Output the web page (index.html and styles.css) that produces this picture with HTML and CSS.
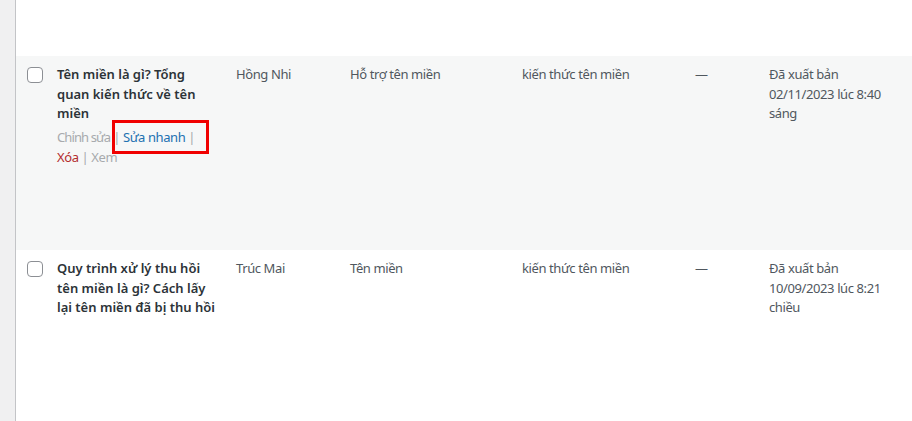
FILE: index.html
```html
<!DOCTYPE html>
<html lang="vi">
<head>
<meta charset="utf-8">
<title>Bài viết</title>
<link rel="stylesheet" href="styles.css">
</head>
<body>
<div class="wrap">
  <div class="top-space"></div>
  <div class="row row-alt">
    <div class="cell check"><span class="checkbox"></span></div>
    <div class="cell title">
      <strong class="post-title">Tên miền là gì? Tổng quan kiến thức về tên miền</strong>
      <div class="row-actions"><span class="act-muted act-edit">Chỉnh sửa</span><span class="sep"> | </span><span class="hl"><span class="act-link">Sửa nhanh</span><span class="sep"> |</span><span class="hl-box"></span></span> <span class="act-del">Xóa</span><span class="sep"> | </span><span class="act-muted">Xem</span></div>
    </div>
    <div class="cell">Hồng Nhi</div>
    <div class="cell">Hỗ trợ tên miền</div>
    <div class="cell">kiến thức tên miền</div>
    <div class="cell">—</div>
    <div class="cell date">Đã xuất bản<br>02/11/2023 lúc 8:40 sáng</div>
  </div>
  <div class="row">
    <div class="cell check"><span class="checkbox"></span></div>
    <div class="cell title">
      <strong class="post-title">Quy trình xử lý thu hồi tên miền là gì? Cách lấy lại tên miền đã bị thu hồi</strong>
    </div>
    <div class="cell">Trúc Mai</div>
    <div class="cell">Tên miền</div>
    <div class="cell">kiến thức tên miền</div>
    <div class="cell">—</div>
    <div class="cell date">Đã xuất bản<br>10/09/2023 lúc 8:21 chiều</div>
  </div>
</div>
</body>
</html>
```

FILE: styles.css
```css
* { box-sizing: border-box; }
html, body { margin: 0; height: 100%; }
body {
  background: #f0f0f1;
  font-family: "Noto Sans", "Open Sans", sans-serif;
  font-size: 13px;
  line-height: 1.5;
  letter-spacing: -0.4px;
  color: #50575e;
}
.wrap {
  margin-left: 15px;
  border-left: 1px solid #c3c4c7;
  background: #fff;
  min-height: 100%;
}
.top-space { height: 56px; }
.row {
  display: grid;
  grid-template-columns: 31px 179px 114px 172px 173px 74px 1fr;
  min-height: 194px;
}
.row-alt { background: #f6f7f7; }
.cell { padding: 9px 10px 8px; }
.cell.check { padding: 11px 0 0 11px; }
.checkbox {
  display: block;
  width: 16px;
  height: 16px;
  border: 1px solid #8c8f94;
  border-radius: 4px;
  background: #fff;
}
.post-title {
  display: block;
  font-weight: 600;
  color: #2c3338;
  font-size: 13px;
  letter-spacing: 0;
}
.row-actions {
  padding-top: 3px;
  line-height: 20px;
  color: #a7aaad;
}
.act-muted { color: #a7aaad; }
.act-edit { letter-spacing: -0.9px; }
.act-link { color: #2271b1; }
.act-del { color: #b32d2e; }
.sep { color: #a7aaad; }
.hl { position: relative; }
.hl-box {
  position: absolute;
  left: -11px;
  right: -14px;
  top: -8px;
  bottom: -8px;
  border: 3px solid #f00000;
}
```
